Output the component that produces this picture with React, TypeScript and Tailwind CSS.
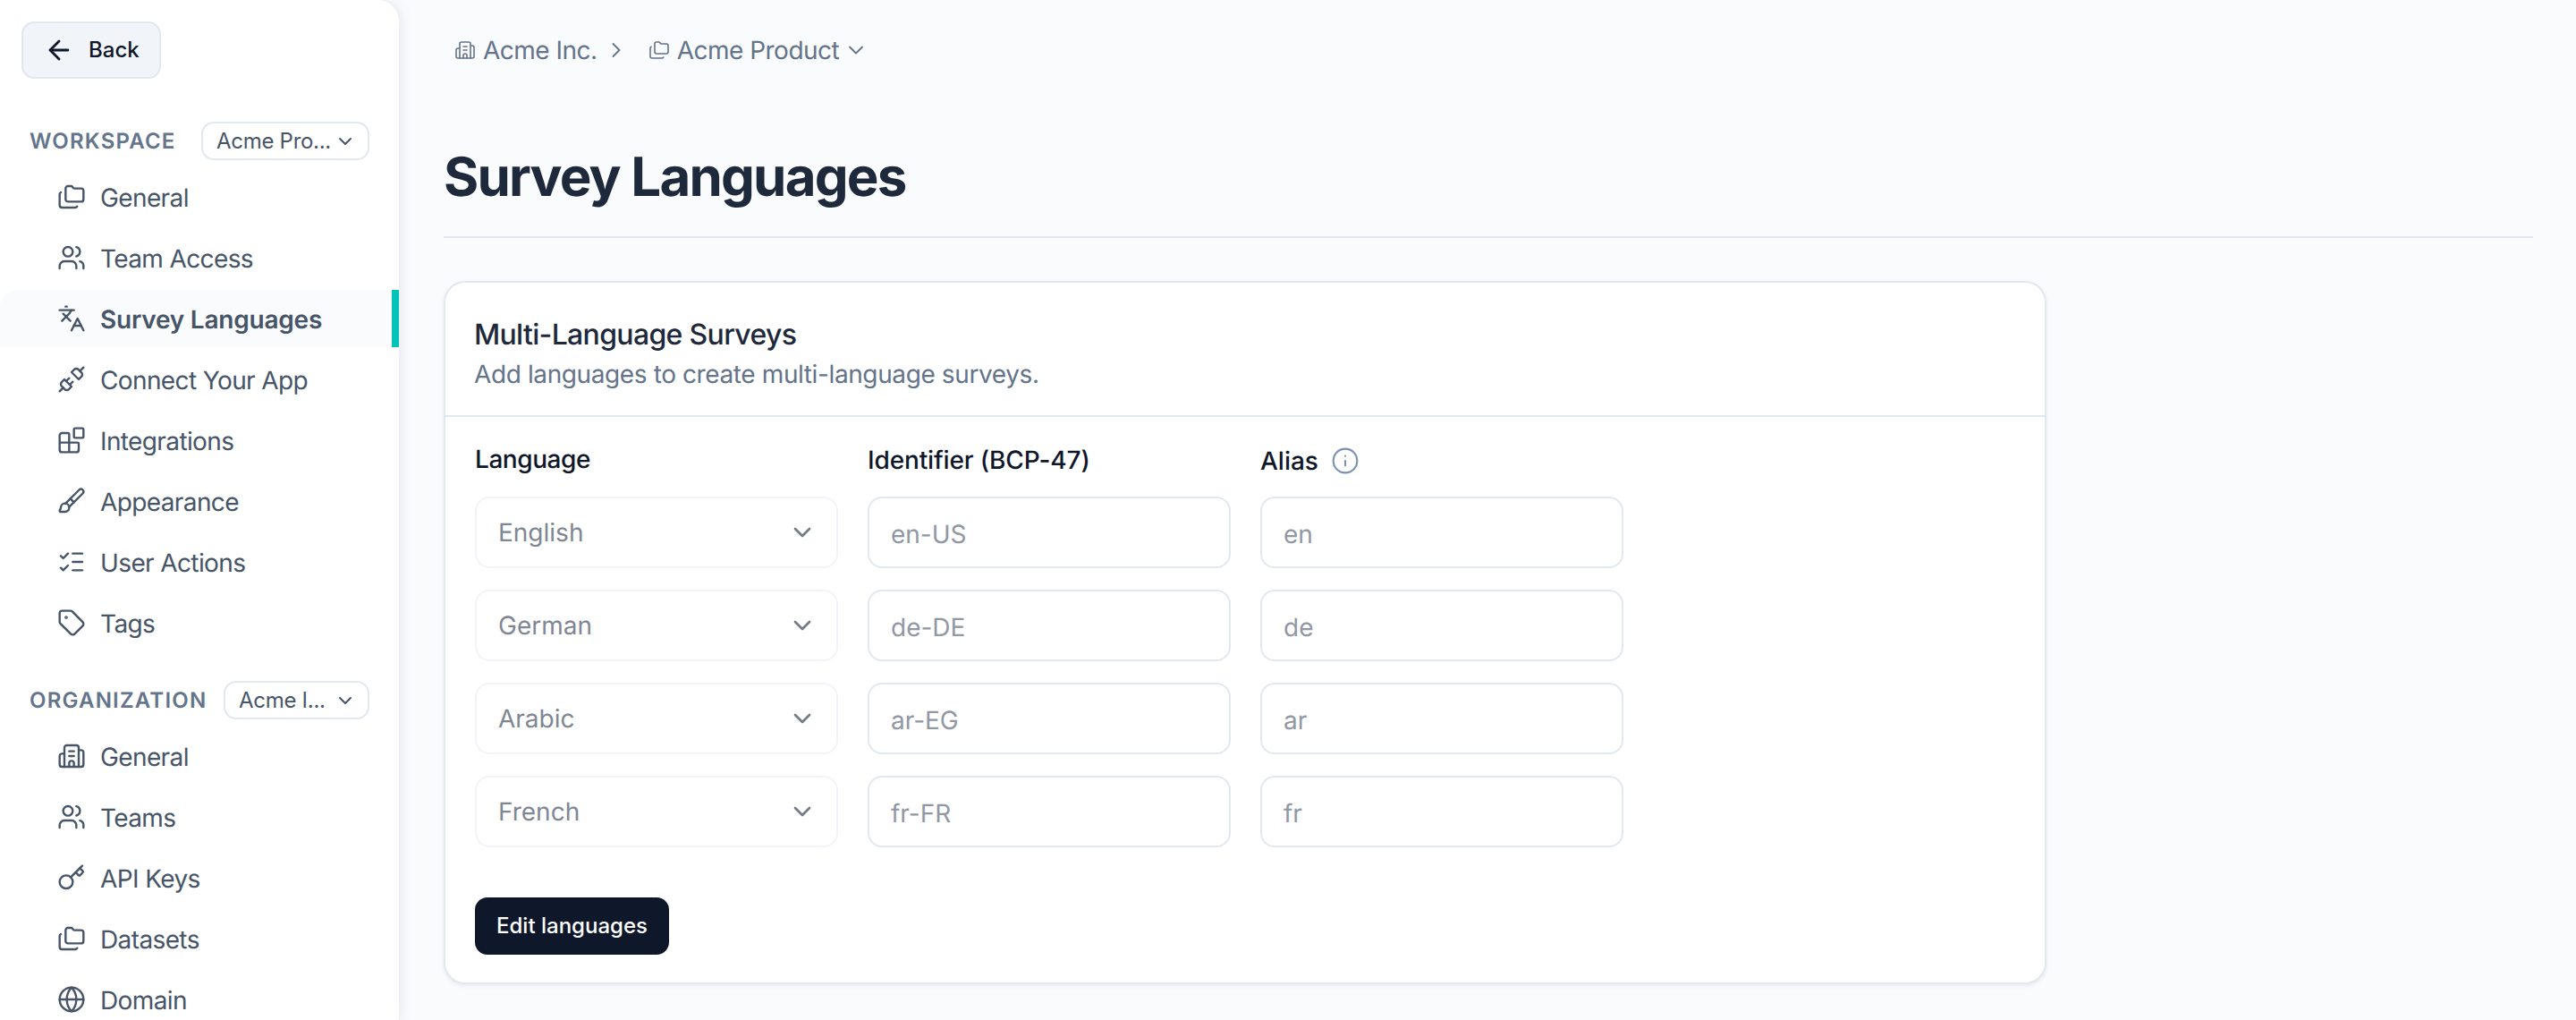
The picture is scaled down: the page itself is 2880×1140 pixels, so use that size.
import {
  ArrowLeft,
  Blocks,
  Brush,
  Building2,
  ChevronDown,
  ChevronRight,
  Folders,
  Globe,
  Info,
  Key,
  Languages,
  ListChecks,
  Tag,
  Unplug,
  Users,
} from "lucide-react";

const workspaceItems = [
  { label: "General", icon: Folders },
  { label: "Team Access", icon: Users },
  { label: "Survey Languages", icon: Languages, active: true },
  { label: "Connect Your App", icon: Unplug },
  { label: "Integrations", icon: Blocks },
  { label: "Appearance", icon: Brush },
  { label: "User Actions", icon: ListChecks },
  { label: "Tags", icon: Tag },
];

const organizationItems = [
  { label: "General", icon: Building2 },
  { label: "Teams", icon: Users },
  { label: "API Keys", icon: Key },
  { label: "Datasets", icon: Folders },
  { label: "Domain", icon: Globe },
];

const languages = [
  { name: "English", code: "en-US", alias: "en" },
  { name: "German", code: "de-DE", alias: "de" },
  { name: "Arabic", code: "ar-EG", alias: "ar" },
  { name: "French", code: "fr-FR", alias: "fr" },
];

type NavItem = {
  label: string;
  icon: typeof Folders;
  active?: boolean;
};

function SectionHeader({ title, value, width }: { title: string; value: string; width: string }) {
  return (
    <div className="flex h-[43px] items-center justify-between pl-[33px] pr-[33px]">
      <span className="text-[24px] font-semibold uppercase tracking-[0.05em] text-[#64748b]">{title}</span>
      <button
        className={`flex h-[43px] ${width} items-center justify-between rounded-[14px] border-2 border-[#e2e8f0] bg-white pl-[15px] pr-[13px] text-[24px] tracking-[-0.012em] text-[#475569]`}
      >
        <span>{value}</span>
        <ChevronDown size={24} className="text-[#475569]" />
      </button>
    </div>
  );
}

function NavList({ items }: { items: NavItem[] }) {
  return (
    <ul className="mt-[9px] flex flex-col gap-[4px]">
      {items.map((item) => {
        const Icon = item.icon;
        return (
          <li
            key={item.label}
            className={
              item.active
                ? "flex h-[64px] items-center rounded-tl-[20px] border-r-[8px] border-[#00c4b8] bg-[#fafbfd] pl-[64px] text-[28px] font-semibold tracking-[-0.008em] text-[#475569]"
                : "flex h-[64px] items-center pl-[64px] text-[28px] tracking-[-0.022em] text-[#475569]"
            }
          >
            <Icon size={32} strokeWidth={1.8} className="mr-[16px] shrink-0" />
            <span className="pt-[1px]">{item.label}</span>
          </li>
        );
      })}
    </ul>
  );
}

function Select({ name }: { name: string }) {
  return (
    <div className="flex h-[80px] items-center justify-between rounded-[16px] border-2 border-[#f1f5f9] bg-white pl-[24px] pr-[22px] text-[28px] text-[#7f8794]">
      {name}
      <ChevronDown size={32} className="text-[#737b88]" />
    </div>
  );
}

function TextField({ value }: { value: string }) {
  return (
    <div className="flex h-[80px] items-center rounded-[16px] border-2 border-[#e2e8f0] bg-white pl-[24px] pt-[3px] text-[28px] text-[#9198a4]">
      {value}
    </div>
  );
}

export default function App() {
  return (
    <div className="flex h-[1140px] w-[2880px] overflow-hidden bg-[#fafbfd] font-['Inter',sans-serif] [font-optical-sizing:none] [text-rendering:geometricPrecision]">
      <aside className="h-[1140px] w-[446px] shrink-0 overflow-hidden rounded-tr-[24px] bg-white shadow-[4px_0_12px_rgba(100,116,139,0.12)]">
        <div className="pl-[24px] pt-[24px]">
          <button className="flex h-[64px] w-[156px] items-center rounded-[14px] border-2 border-[#e2e8f0] bg-[#f1f5f9] pl-[23px] text-[24px] font-medium text-[#0f172a]">
            <ArrowLeft size={34} className="mr-[16px]" />
            Back
          </button>
        </div>
        <div className="mt-[48px]">
          <SectionHeader title="Workspace" value="Acme Pro..." width="w-[188px]" />
          <NavList items={workspaceItems} />
        </div>
        <div className="mt-[33px]">
          <SectionHeader title="Organization" value="Acme I..." width="w-[163px]" />
          <NavList items={organizationItems} />
        </div>
      </aside>

      <main className="min-w-0 flex-1 pl-[50px] pr-[48px]">
        <nav className="ml-[12px] flex h-[112px] items-center text-[28px] tracking-[-0.018em] text-[#64748b]">
          <Building2 size={24} strokeWidth={1.6} className="mr-[8px]" />
          Acme Inc.
          <ChevronRight size={28} strokeWidth={1.6} className="ml-[7px]" />
          <Folders size={24} strokeWidth={1.6} className="ml-[22px] mr-[8px]" />
          Acme Product
          <ChevronDown size={28} strokeWidth={1.6} className="ml-[5px]" />
        </nav>

        <div className="mt-[50px] border-b-2 border-[#e2e8f0] pb-[30px]">
          <h1 className="text-[60px] font-[750] leading-[72px] tracking-[-0.03em] text-[#1e293b]">Survey Languages</h1>
        </div>

        <section className="mt-[48px] w-[1792px] rounded-[24px] border-2 border-[#e2e8f0] bg-white shadow-[0_2px_4px_rgba(100,116,139,0.12)]">
          <div className="h-[150px] border-b-2 border-[#e2e8f0] px-[33px] pt-[38px]">
            <h2 className="-ml-[1px] text-[32px] font-medium leading-[40px] tracking-[-0.021em] text-[#1e293b]">Multi-Language Surveys</h2>
            <p className="-ml-[1px] mt-[4px] text-[28px] leading-[40px] tracking-[-0.014em] text-[#64748b]">Add languages to create multi-language surveys.</p>
          </div>
          <div className="px-[33px] pb-[31px] pt-[27px]">
            <div className="flex gap-[33px]">
              <div className="w-[406px]">
                <div className="mb-[22px] h-[40px] text-[28px] font-medium leading-[40px] tracking-[-0.016em] text-[#0f172a]">Language</div>
                <div className="flex flex-col gap-[24px]">
                  {languages.map((l) => (
                    <Select key={l.name} name={l.name} />
                  ))}
                </div>
              </div>
              <div className="w-[406px]">
                <div className="mb-[22px] h-[40px] pt-[1px] text-[28px] font-medium leading-[40px] tracking-[-0.005em] text-[#0f172a]">Identifier (BCP-47)</div>
                <div className="flex flex-col gap-[24px]">
                  {languages.map((l) => (
                    <TextField key={l.code} value={l.code} />
                  ))}
                </div>
              </div>
              <div className="w-[406px]">
                <div className="mb-[22px] flex h-[40px] items-center pt-[3px] text-[28px] font-medium text-[#0f172a]">
                  Alias
                  <Info size={32} strokeWidth={1.6} className="ml-[14px] text-[#7c93b2]" />
                </div>
                <div className="flex flex-col gap-[24px]">
                  {languages.map((l) => (
                    <TextField key={l.alias} value={l.alias} />
                  ))}
                </div>
              </div>
            </div>
            <button className="mt-[56px] flex h-[64px] w-[217px] items-center justify-center rounded-[14px] bg-[#0f172a] text-[24px] font-medium text-white">
              Edit languages
            </button>
          </div>
        </section>
      </main>
    </div>
  );
}
